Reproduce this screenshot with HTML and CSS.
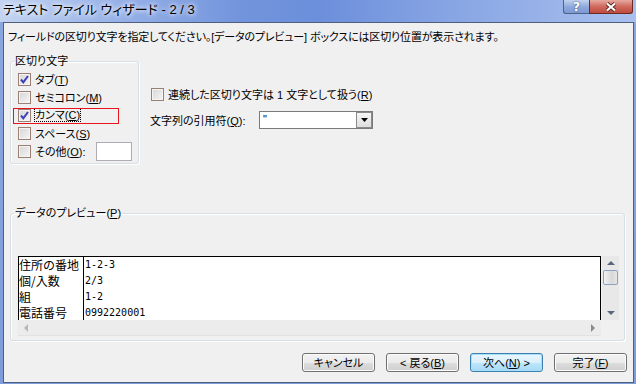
FILE: index.html
```html
<!DOCTYPE html>
<html lang="ja">
<head>
  <meta charset="UTF-8">
  <title>テキスト ファイル ウィザード - 2 / 3</title>
  <link rel="stylesheet" href="styles.css">
</head>
<body>

<div class="window">
  <div class="titlebar">
    <span class="title">テキスト ファイル ウィザード - 2 / 3</span>
    <div class="caption-buttons">
      <span class="cap help">?</span>
      <span class="cap close">
        <svg width="14" height="10" viewBox="0 0 14 10">
          <path d="M3 1.5 L11 8.5 M11 1.5 L3 8.5" stroke="#5a2520" stroke-width="4" fill="none"/>
          <path d="M3 1.5 L11 8.5 M11 1.5 L3 8.5" stroke="#fff" stroke-width="2.2" fill="none"/>
        </svg>
      </span>
    </div>
  </div>

  <div class="client">
    <p class="intro">フィールドの区切り文字を指定してください。[データのプレビュー] ボックスには区切り位置が表示されます。</p>

    <div class="top">
      <!-- 区切り文字 -->
      <fieldset class="group delims">
        <legend>区切り文字</legend>
        <div class="check"><span class="box on"></span><span>タブ(<u>T</u>)</span></div>
        <div class="check"><span class="box"></span><span>セミコロン(<u>M</u>)</span></div>
        <div class="check marked"><span class="box on"></span><span class="focus">カンマ(<u>C</u>)</span></div>
        <div class="check"><span class="box"></span><span>スペース(<u>S</u>)</span></div>
        <div class="check"><span class="box"></span><span>その他(<u>O</u>):</span><span class="other-input"></span></div>
      </fieldset>

      <div class="options">
        <div class="check"><span class="box"></span><span>連続した区切り文字は 1 文字として扱う(<u>R</u>)</span></div>
        <div class="quote-row">
          <span class="quote-label">文字列の引用符(<u>Q</u>):</span>
          <div class="combo">
            <span class="combo-value">"</span>
            <span class="combo-btn">
              <svg width="7" height="4" viewBox="0 0 7 4"><path d="M0 0 H7 L3.5 4 Z" fill="#000"/></svg>
            </span>
          </div>
        </div>
      </div>
    </div>

    <!-- データのプレビュー -->
    <fieldset class="group preview">
      <legend>データのプレビュー(<u>P</u>)</legend>
      <div class="preview-box">
        <div class="data">
          <div class="grid">
            <span class="c1">住所の番地</span><span class="c2">1-2-3</span>
            <span class="c1">個/入数</span><span class="c2">2/3</span>
            <span class="c1">組</span><span class="c2">1-2</span>
            <span class="c1">電話番号</span><span class="c2">0992220001</span>
          </div>
          <div class="vscroll">
            <span class="arrow up"></span>
            <span class="thumb"></span>
            <span class="arrow down"></span>
          </div>
        </div>
        <div class="hscroll">
          <span class="arrow left"></span>
          <span class="arrow right"></span>
        </div>
      </div>
    </fieldset>

    <div class="buttons">
      <button>キャンセル</button>
      <button>&lt; 戻る(<u>B</u>)</button>
      <button class="default">次へ(<u>N</u>) &gt;</button>
      <button>完了(<u>F</u>)</button>
    </div>
  </div>
</div>

</body>
</html>
```

FILE: styles.css
```css
body {
  margin: 0;
  font-family: "Liberation Sans", "Noto Sans CJK JP", sans-serif;
  font-size: 11px;
  font-feature-settings: "palt";
  color: #000;
}
.window {
  width: 636px;
  height: 384px;
  display: flex;
  flex-direction: column;
  background: linear-gradient(to bottom, #8ba7e0, #7e9cdb);
}
.titlebar {
  height: 22px;
  display: flex;
  align-items: flex-start;
  background: linear-gradient(to right, #c3d4f1 0%, #98b2e8 18%, #7294dc 38%, #6c8fdb 50%, #89a6e4 72%, #a9c0ee 100%);
}
.title {
  padding: 2px 0 0 3px;
  font-size: 13px;
  line-height: 16px;
  text-shadow: 0 0 4px #fff, 0 0 6px #fff;
}
.caption-buttons {
  margin-left: auto;
  margin-right: 3px;
  display: flex;
}
.cap {
  height: 14px;
  box-sizing: border-box;
  display: flex;
  align-items: center;
  justify-content: center;
  border: 1px solid #4e6286;
  border-top: none;
}
.help {
  width: 26px;
  border-radius: 0 0 0 3px;
  border-right: none;
  background: linear-gradient(to bottom, #c2d2ef, #8da7db 55%, #7e9ad4);
  color: #fff;
  font: bold 12px "DejaVu Sans", sans-serif;
  text-shadow: 0 0 2px #34466a;
}
.close {
  width: 44px;
  border-radius: 0 0 3px 0;
  border-color: #6a2a25;
  background: linear-gradient(to bottom, #e6aaa2, #cf6a5e 50%, #c04a3d);
}
.client {
  flex: 1;
  margin: 0 2px 1px 3px;
  border: 1px solid #4f5f7e;
  background: #f0f0f0;
}
.intro {
  margin: 0;
  padding: 7px 0 0 4px;
  line-height: 14px;
  letter-spacing: -0.15px;
  white-space: nowrap;
}
.top {
  display: flex;
  margin-top: 10px;
  padding-left: 6px;
}
.group {
  margin: 0;
  box-sizing: border-box;
  border: 1px solid #d5dfe5;
  border-radius: 3px;
  box-shadow: inset 1px 1px #fff, 1px 1px #fff;
}
.group legend {
  margin-left: -4px;
  padding: 0 1px;
  line-height: 14px;
}
.delims {
  width: 129px;
  padding: 2px 6px 3px 7px;
}
.check {
  height: 18px;
  display: flex;
  align-items: center;
  gap: 4px;
  white-space: nowrap;
}
.marked {
  position: relative;
}
.marked::after {
  content: "";
  position: absolute;
  left: -5px;
  top: 2px;
  width: 106px;
  height: 16px;
  box-sizing: border-box;
  border: 1px solid #e8141e;
}
.focus {
  outline: 1px dotted #000;
  outline-offset: -1px;
  padding: 0 1px;
  margin-left: -1px;
  line-height: 14px;
}
.box {
  width: 13px;
  height: 13px;
  box-sizing: border-box;
  flex: none;
  border: 1px solid #9a8074;
  background: linear-gradient(135deg, #d6d6d6, #f6f6f6);
  box-shadow: inset 0 0 0 1px #f4f4f4;
}
.box.on {
  background: url("data:image/svg+xml;utf8,<svg xmlns='http://www.w3.org/2000/svg' width='11' height='11'><path d='M2 5.5 L4.3 8.3 L9 2' stroke='%233b3fb8' stroke-width='2' fill='none'/></svg>") center no-repeat, linear-gradient(135deg, #d6d6d6, #f6f6f6);
}
.other-input {
  margin-left: auto;
  width: 36px;
  height: 19px;
  box-sizing: border-box;
  border: 1px solid #abadb3;
  background: #fff;
}
.options {
  margin: 31px 0 0 11px;
}
.options .check {
  padding-left: 1px;
}
.quote-row {
  display: flex;
  align-items: center;
  height: 18px;
  margin-top: 8px;
}
.quote-label {
  width: 109px;
  white-space: nowrap;
}
.combo {
  width: 114px;
  height: 18px;
  box-sizing: border-box;
  display: flex;
  border: 1px solid #7a7a7a;
  background: #fff;
}
.combo-value {
  flex: 1;
  padding-left: 3px;
  line-height: 14px;
}
.combo-btn {
  width: 14px;
  display: flex;
  align-items: center;
  justify-content: center;
  border: 1px solid #8a8a8a;
  background: linear-gradient(to bottom, #f5f5f5, #dedede);
}
.preview {
  width: 615px;
  height: 135px;
  margin: 42px 0 0 6px;
  padding: 36px 0 0 7px;
}
.preview-box {
  width: 601px;
}
.data {
  display: flex;
  height: 64px;
}
.grid {
  width: 584px;
  box-sizing: border-box;
  border: 1px solid #000;
  border-bottom: none;
  background: #fff;
  display: grid;
  grid-template-columns: 65px 1fr;
  grid-auto-rows: 16px;
  font-family: "Noto Sans CJK JP", sans-serif;
  font-feature-settings: normal;
  font-size: 12px;
  line-height: 16px;
  overflow: hidden;
}
.c1 {
  border-right: 1px solid #000;
  white-space: nowrap;
}
.c2 {
  padding-left: 1px;
  font-family: "DejaVu Sans Mono", monospace;
  font-size: 10px;
}
.vscroll {
  width: 17px;
  display: flex;
  flex-direction: column;
  align-items: center;
  background: #e8e8e8;
  border-left: 1px solid #f4f4f4;
}
.arrow {
  width: 0;
  height: 0;
  border: 4px solid transparent;
}
.arrow.up {
  margin-top: 5px;
  border-top: none;
  border-bottom: 4px solid #59637a;
}
.thumb {
  width: 15px;
  height: 15px;
  box-sizing: border-box;
  margin-top: 5px;
  border: 1px solid #8ea1c2;
  border-radius: 2px;
  background: linear-gradient(to right, #f2f2f2, #d8d8d8 60%, #e6e6e6);
}
.arrow.down {
  margin-top: auto;
  margin-bottom: 5px;
  border-bottom: none;
  border-top: 4px solid #59637a;
}
.hscroll {
  width: 583px;
  height: 16px;
  display: flex;
  align-items: center;
  justify-content: space-between;
  padding: 0 6px;
  box-sizing: border-box;
  background: #ececec;
  border-bottom: 1px solid #e2e2e2;
}
.arrow.left {
  border-left: none;
  border-right: 4px solid #b8b8b8;
}
.arrow.right {
  border-right: none;
  border-left: 4px solid #8a8a8a;
}
.buttons {
  display: flex;
  justify-content: flex-end;
  gap: 11px;
  margin-top: 12px;
  padding-right: 6px;
}
button {
  width: 73px;
  height: 19px;
  padding: 0;
  font-family: "Liberation Sans", "Noto Sans CJK JP", sans-serif;
  font-size: 11px;
  line-height: 16px;
  font-feature-settings: "palt";
  color: #000;
  border: 1px solid #707070;
  border-radius: 3px;
  background: linear-gradient(to bottom, #f2f2f2 0%, #ebebeb 50%, #dddddd 51%, #cfcfcf 100%);
  box-shadow: inset 0 0 0 1px #fcfcfc;
}
button.default {
  border-color: #3c7fb1;
  box-shadow: inset 0 0 0 1px #a6dff8;
  background: linear-gradient(to bottom, #eaf6fd 0%, #d9f0fc 50%, #bee6fd 51%, #a7d9f5 100%);
}
```
